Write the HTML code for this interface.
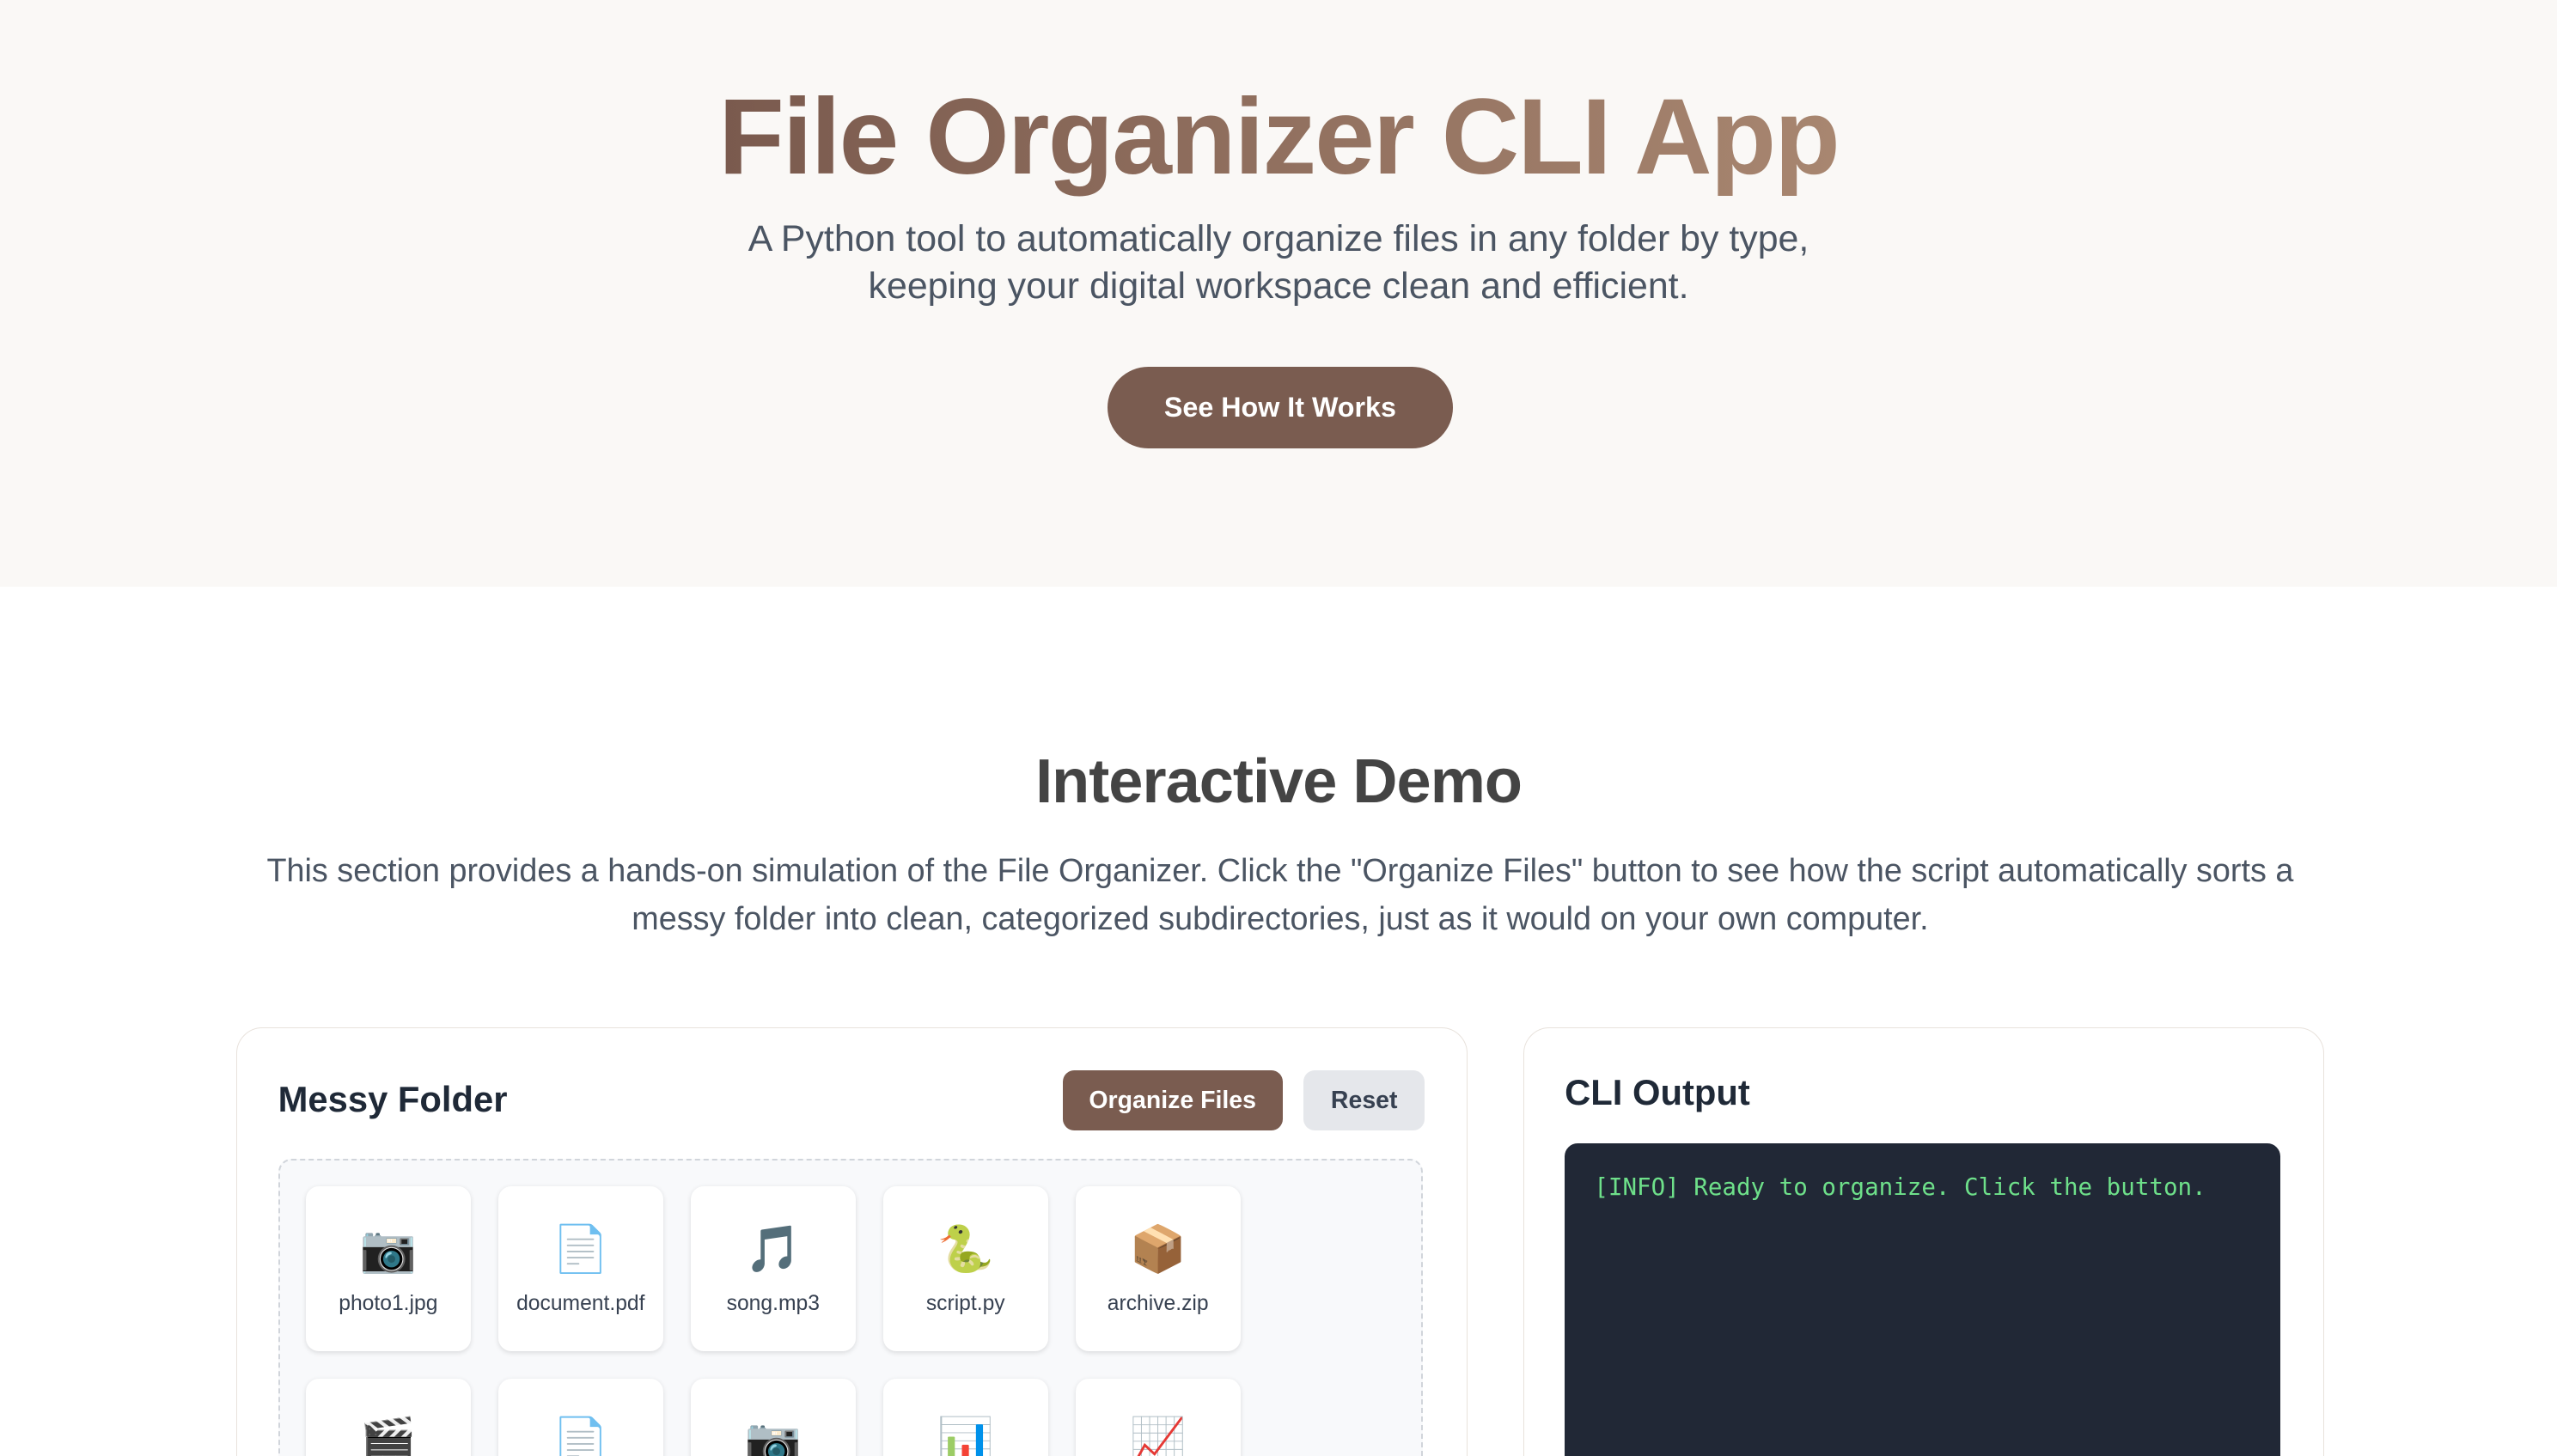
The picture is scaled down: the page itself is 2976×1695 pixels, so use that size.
<!DOCTYPE html>
<html><head><meta charset="utf-8"><style>
html{zoom:1.898;height:893px;overflow:hidden}
body{margin:0;width:1568px;height:893px;overflow:hidden;background:#fff;font-family:"Liberation Sans","DejaVu Sans",sans-serif;position:relative}
.hero{height:360px;background:#faf8f6;text-align:center;position:relative}
.hero h1{position:absolute;left:0;right:0;top:44px;margin:0;font-size:66px;font-weight:700;letter-spacing:-1px;line-height:80px;}
.hero h1 span{background:linear-gradient(90deg,#7a5a4e,#a88670);-webkit-background-clip:text;color:transparent}
.hero p{position:absolute;left:0;right:0;top:132px;margin:0;font-size:22.6px;line-height:29px;color:#4b5563}
.btn1{position:absolute;left:679px;top:225px;width:212px;height:50px;border-radius:25px;background:#7a5c50;color:#fff;font-weight:700;font-size:17px;line-height:50px}
h2{position:absolute;left:0;right:0;top:458px;margin:0;text-align:center;font-size:38px;font-weight:700;color:#444;letter-spacing:-.5px}
.desc{position:absolute;left:140px;width:1290px;top:520px;margin:0;text-align:center;font-size:19.9px;line-height:29.5px;color:#4b5563}
.card{position:absolute;top:630px;height:400px;border:1px solid #e8e2dc;border-radius:16px;background:#fff}
.t{position:absolute;font-size:22px;font-weight:700;color:#1f2937}
.b{position:absolute;top:26px;height:37px;border-radius:7px;font-size:15px;font-weight:700;line-height:37px;text-align:center}
.box{position:absolute;left:25px;top:80px;width:700px;height:300px;border:1.5px dashed #d1d5db;border-radius:8px;background:#f8f9fb}
.tile{position:absolute;width:101px;height:101px;background:#fff;border-radius:8px;box-shadow:0 1px 3px rgba(0,0,0,.12);text-align:center;font-size:13px;color:#374151}
.tile i{display:block;font-style:normal;font-size:28px;height:34px;margin-top:22px;line-height:34px}
.tile s{text-decoration:none;display:block;margin-top:9px}
.term{position:absolute;left:25px;top:71px;width:439px;height:300px;background:#212836;border-radius:8px;color:#6ee08a;font-family:"DejaVu Sans Mono","Liberation Mono",monospace;font-size:14.5px;padding:18px 18px;box-sizing:border-box}
</style></head><body>
<div class="hero">
<h1><span>File Organizer CLI App</span></h1>
<p>A Python tool to automatically organize files in any folder by type,<br>keeping your digital workspace clean and efficient.</p>
<div class="btn1">See How It Works</div>
</div>
<h2>Interactive Demo</h2>
<p class="desc">This section provides a hands-on simulation of the File Organizer. Click the "Organize Files" button to see how the script automatically sorts a<br>messy folder into clean, categorized subdirectories, just as it would on your own computer.</p>
<div class="card" style="left:145px;width:754px">
<div class="t" style="left:25px;top:31px">Messy Folder</div>
<div class="b" style="left:506px;width:135px;background:#7a5c50;color:#fff">Organize Files</div>
<div class="b" style="left:654px;width:74px;background:#e5e7eb;color:#374151">Reset</div>
<div class="box">
<div class="tile" style="left:16px;top:16px"><i>📷</i><s>photo1.jpg</s></div>
<div class="tile" style="left:134px;top:16px"><i>📄</i><s>document.pdf</s></div>
<div class="tile" style="left:252px;top:16px"><i>🎵</i><s>song.mp3</s></div>
<div class="tile" style="left:370px;top:16px"><i>🐍</i><s>script.py</s></div>
<div class="tile" style="left:488px;top:16px"><i>📦</i><s>archive.zip</s></div>
<div class="tile" style="left:16px;top:134px"><i>🎬</i><s>video.mp4</s></div>
<div class="tile" style="left:134px;top:134px"><i>📄</i><s>notes.txt</s></div>
<div class="tile" style="left:252px;top:134px"><i>📷</i><s>photo2.png</s></div>
<div class="tile" style="left:370px;top:134px"><i>📊</i><s>data.csv</s></div>
<div class="tile" style="left:488px;top:134px"><i>📈</i><s>report.xlsx</s></div>
</div>
</div>
<div class="card" style="left:934px;width:490px">
<div class="t" style="left:25px;top:27px">CLI Output</div>
<div class="term">[INFO] Ready to organize. Click the button.</div>
</div>
</body></html>
